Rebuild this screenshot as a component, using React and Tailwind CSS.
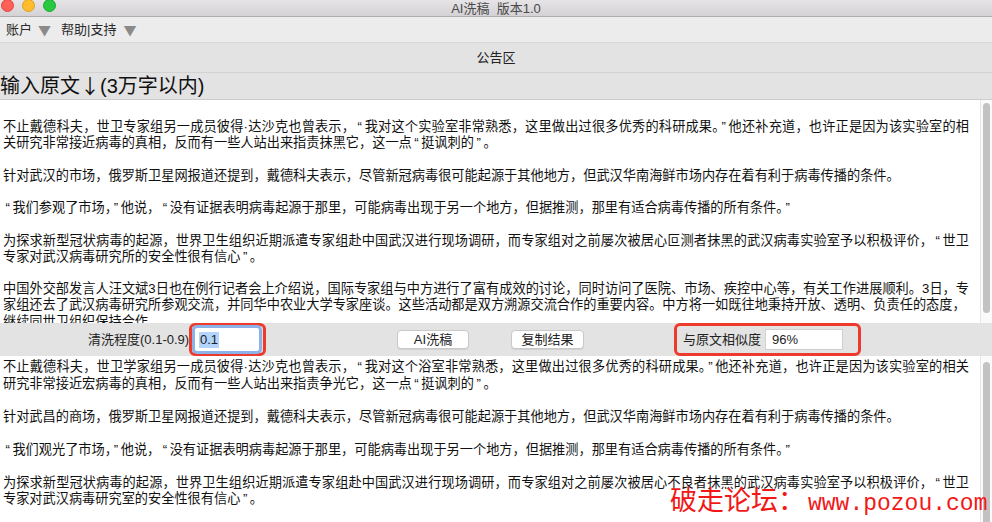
import React from "react";

const FONT = { fontFamily: '"Liberation Sans", "Noto Sans CJK SC", sans-serif' };
const CJK = { fontFamily: '"Noto Sans CJK SC", "Liberation Sans", sans-serif' };

// [text, justified?]
const upper = [
  ["", false],
  ["不止戴德科夫，世卫专家组另一成员彼得·达沙克也曾表示，“我对这个实验室非常熟悉，这里做出过很多优秀的科研成果。”他还补充道，也许正是因为该实验室的相", true],
  ["关研究非常接近病毒的真相，反而有一些人站出来指责抹黑它，这一点“挺讽刺的”。", false],
  ["", false],
  ["针对武汉的市场，俄罗斯卫星网报道还提到，戴德科夫表示，尽管新冠病毒很可能起源于其他地方，但武汉华南海鲜市场内存在着有利于病毒传播的条件。", false],
  ["", false],
  ["“我们参观了市场，”他说，“没有证据表明病毒起源于那里，可能病毒出现于另一个地方，但据推测，那里有适合病毒传播的所有条件。”", false],
  ["", false],
  ["为探求新型冠状病毒的起源，世界卫生组织近期派遣专家组赴中国武汉进行现场调研，而专家组对之前屡次被居心叵测者抹黑的武汉病毒实验室予以积极评价，“世卫", true],
  ["专家对武汉病毒研究所的安全性很有信心”。", false],
  ["", false],
  ["中国外交部发言人汪文斌3日也在例行记者会上介绍说，国际专家组与中方进行了富有成效的讨论，同时访问了医院、市场、疾控中心等，有关工作进展顺利。3日，专", true],
  ["家组还去了武汉病毒研究所参观交流，并同华中农业大学专家座谈。这些活动都是双方溯源交流合作的重要内容。中方将一如既往地秉持开放、透明、负责任的态度，", false],
  ["继续同世卫组织保持合作。", false],
];

const lower = [
  ["不止戴德科夫，世卫学家组另一成员彼得·达沙克也曾表示，“我对这个浴室非常熟悉，这里做出过很多优秀的科研成果。”他还补充道，也许正是因为该实验室的相关", true],
  ["研究非常接近宏病毒的真相，反而有一些人站出来指责争光它，这一点“挺讽刺的”。", false],
  ["", false],
  ["针对武昌的商场，俄罗斯卫星网报道还提到，戴德科夫表示，尽管新冠病毒很可能起源于其他地方，但武汉华南海鲜市场内存在着有利于病毒传播的条件。", false],
  ["", false],
  ["“我们观光了市场，”他说，“没有证据表明病毒起源于那里，可能病毒出现于另一个地方，但据推测，那里有适合病毒传播的所有条件。”", false],
  ["", false],
  ["为探求新型冠状病毒的起源，世界卫生组织近期派遣专家组赴中国武汉进行现场调研，而专家组对之前屡次被居心不良者抹黑的武汉病毒实验室予以积极评价，“世卫", true],
  ["专家对武汉病毒研究室的安全性很有信心”。", false],
  ["", false],
  ["", false],
];

function Text({ s }) {
  const parts = s.split(/([“”])/);
  return parts.map((p, i) =>
    p === "“" || p === "”" ? (
      <span key={i} className="px-[2.5px]">{p}</span>
    ) : (
      <React.Fragment key={i}>{p}</React.Fragment>
    )
  );
}

function Lines({ lines, lh }) {
  return lines.map(([l, j], i) =>
    j ? (
      <div key={i} className={`w-[966px] text-justify [text-align-last:justify] whitespace-nowrap ${lh}`}>
        <Text s={l} />
      </div>
    ) : (
      <div key={i} className={`whitespace-nowrap ${lh}`}>
        {l ? <Text s={l} /> : "\u00a0"}
      </div>
    )
  );
}

export default function App() {
  return (
    <div
      className="relative w-[992px] h-[522px] overflow-hidden bg-white flex flex-col text-[13px] text-[#1a1a1a]"
      style={FONT}
    >
      {/* title bar */}
      <div className="relative h-[17px] shrink-0 bg-gradient-to-b from-[#e6e4e6] to-[#d4d2d4] border-b border-[#aeaeae] flex items-center justify-center">
        <div className="absolute left-[1px] top-[-1px] flex gap-[8px]">
          <div className="w-[13px] h-[13px] rounded-full bg-[#fe5f57] border border-[#e2463f]" />
          <div className="w-[13px] h-[13px] rounded-full bg-[#febc2e] border border-[#e1a116]" />
          <div className="w-[13px] h-[13px] rounded-full bg-[#28c840] border border-[#12ac28]" />
        </div>
        <span className="text-[13px] text-[#4a4a4a] leading-none mt-[1px]">AI洗稿&nbsp;&nbsp;版本1.0</span>
      </div>

      {/* menu bar */}
      <div className="h-[26px] shrink-0 bg-[#ececec] border-b border-[#d8d8d8] flex items-center pl-[6px] text-[13px] text-[#2a2a2a]">
        <span>账户</span>
        <span className="ml-[6px] text-[#8a8a8a] text-[13px]" style={CJK}>▼</span>
        <span className="ml-[10px]">帮助|支持</span>
        <span className="ml-[7px] text-[#8a8a8a] text-[13px]" style={CJK}>▼</span>
      </div>

      {/* notice */}
      <div className="h-[30px] shrink-0 bg-[#e3e3e3] border-b border-[#d2d2d2] flex items-center justify-center text-[13px] text-[#222]">
        公告区
      </div>

      {/* heading */}
      <div className="h-[27px] shrink-0 bg-[#e3e3e3] border-b border-[#cdcdcd] flex items-center text-[20px] leading-none text-[#111] pb-[1px] whitespace-nowrap">
        输入原文<span style={CJK}>↓</span>(3万字以内)
      </div>

      {/* upper text area */}
      <div className="h-[223px] shrink-0 flex bg-white">
        <div className="flex-1 overflow-hidden pl-[3px] pt-[3px] text-[13.2px] text-[#111]">
          <Lines lines={upper} lh="leading-[16.2px]" />
        </div>
        <div className="w-[12px] shrink-0 bg-[#fafafa] border-l border-[#e6e6e6] pt-[3px] pl-[2px]">
          <div className="w-[7px] h-[210px] rounded-full bg-[#c2c2c2]" />
        </div>
      </div>

      {/* control bar */}
      <div className="h-[33px] shrink-0 bg-[#e3e3e3] flex items-center text-[13px] text-[#222]">
        <span className="ml-[88px] w-[101px] whitespace-nowrap">清洗程度(0.1-0.9)</span>
        <div className="w-[77px] h-[33px] border-[3px] border-[#ee3a2c] rounded-[6px] flex items-center pl-[3px]">
          <div className="w-[64px] h-[23px] bg-white rounded-[2px] ring-[3px] ring-[#8bb3ea] flex items-center pl-[4px]">
            <span className="bg-[#b3d4fc] leading-[16px] px-[1px]">0.1</span>
          </div>
        </div>
        <button className="ml-[131px] w-[72px] h-[19px] bg-white border border-[#c9c9c9] rounded-[4px] text-[13px] leading-none text-[#222] shadow-[0_1px_0_rgba(0,0,0,0.08)]">
          AI洗稿
        </button>
        <button className="ml-[42px] w-[73px] h-[19px] bg-white border border-[#c9c9c9] rounded-[4px] text-[13px] leading-none text-[#222] shadow-[0_1px_0_rgba(0,0,0,0.08)]">
          复制结果
        </button>
        <div className="ml-[90px] w-[187px] h-[33px] border-[3px] border-[#ee3a2c] rounded-[6px] flex items-center pl-[6px]">
          <span className="whitespace-nowrap">与原文相似度</span>
          <div className="ml-[4px] w-[78px] h-[21px] bg-white border border-[#d0d0d0] flex items-center pl-[6px] text-[#222]">
            96%
          </div>
        </div>
      </div>

      {/* lower text area */}
      <div className="flex-1 flex bg-white min-h-0">
        <div className="flex-1 overflow-hidden pl-[3px] pt-[3px] text-[13.2px] text-[#111]">
          <Lines lines={lower} lh="leading-[16.5px]" />
        </div>
        <div className="w-[12px] shrink-0 bg-[#fafafa] border-l border-[#e6e6e6] pt-[6px] pl-[2px]">
          <div className="w-[7px] h-[200px] rounded-full bg-[#c2c2c2]" />
        </div>
      </div>

      {/* watermark */}
      <div className="absolute left-[670px] top-[485px] flex items-baseline text-[#f21818] whitespace-nowrap leading-none">
        <span className="text-[27px]" style={{ fontFamily: '"Noto Sans CJK SC", serif' }}>
          破走论坛：
        </span>
        <span className="ml-[3px] text-[23px]" style={{ fontFamily: '"Liberation Mono", monospace' }}>
          www.pozou.com
        </span>
      </div>
    </div>
  );
}
